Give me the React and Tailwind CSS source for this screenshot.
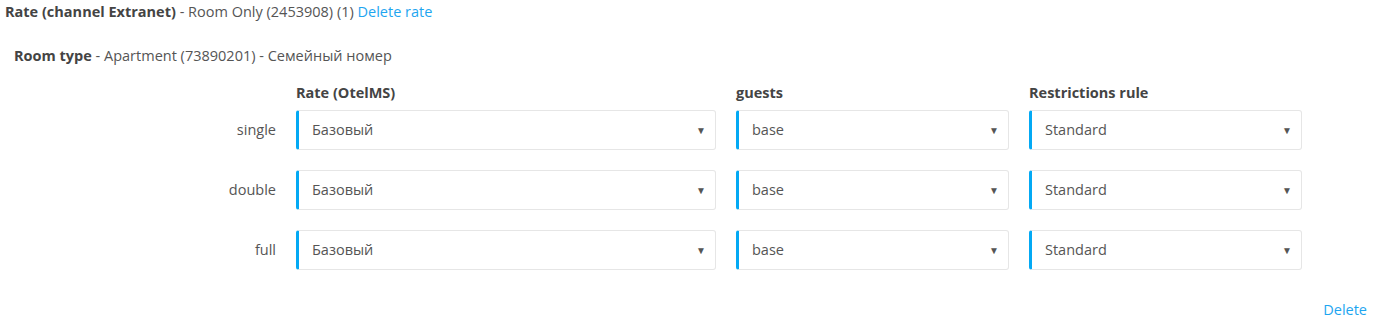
import React from "react";

const rows = ["single", "double", "full"];

function Select({ value }) {
  return (
    <div className="h-10 flex items-center justify-between rounded-[3px] border border-[#e6e6e6] border-l-[3px] border-l-[#03a9f4] pl-[13px] pr-[9px] text-[#555]">
      <span>{value}</span>
      <span className="text-[10px] text-[#555]">▼</span>
    </div>
  );
}

export default function App() {
  return (
    <div className="w-[1373px] h-[323px] bg-white text-[14.5px] text-[#555] font-['Open_Sans',sans-serif]">
      <div className="pl-[5px] pt-[2px] leading-[20px]">
        <span className="font-bold text-[#444]">Rate (channel Extranet)</span> - Room Only (2453908) (1){" "}
        <a className="text-[#1ea5f0] cursor-pointer">Delete rate</a>
      </div>

      <div className="pl-[14px] pt-[24px] leading-[20px]">
        <span className="font-bold text-[#444]">Room type</span> - Apartment (73890201) - Семейный номер
      </div>

      <div className="grid grid-cols-[276px_420px_273px_273px] gap-x-5 mt-[17px] items-center">
        <div />
        <div className="font-bold text-[#444] leading-[20px]">Rate (OtelMS)</div>
        <div className="font-bold text-[#444] leading-[20px]">guests</div>
        <div className="font-bold text-[#444] leading-[20px]">Restrictions rule</div>
      </div>

      <div className="flex flex-col gap-5 mt-[7px]">
        {rows.map((r) => (
          <div key={r} className="grid grid-cols-[276px_420px_273px_273px] gap-x-5 items-center">
            <div className="text-right">{r}</div>
            <Select value="Базовый" />
            <Select value="base" />
            <Select value="Standard" />
          </div>
        ))}
      </div>

      <div className="flex justify-end pr-[6px] mt-[30px]">
        <a className="text-[#1ea5f0] cursor-pointer leading-[20px]">Delete</a>
      </div>
    </div>
  );
}
